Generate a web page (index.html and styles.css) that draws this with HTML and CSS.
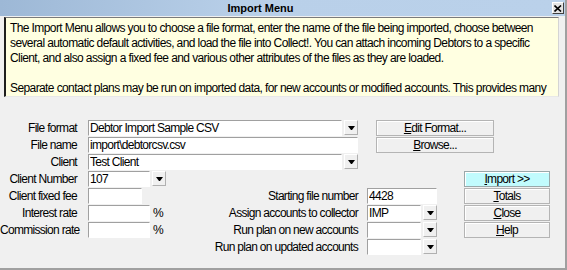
FILE: index.html
```html
<!DOCTYPE html>
<html lang="en">
<head>
    <title>Import Menu</title>
    <link rel="stylesheet" href="styles.css">
</head>
<body>
<div class="window">
    <div class="titlebar">
        <span class="title">Import Menu</span>
        <span class="close-btn">
            <svg width="8" height="7" viewBox="0 0 8 7"><path d="M0.5 0.5 L7 6.5 M7 0.5 L0.5 6.5" stroke="#000" stroke-width="1.6"/></svg>
        </span>
    </div>

    <div class="help-box">
        <p>The Import Menu allows you to choose a file format, enter the name of the file being imported, choose between<br>
        several automatic default activities, and load the file into Collect!. You can attach incoming Debtors to a specific<br>
        Client, and also assign a fixed fee and various other attributes of the files as they are loaded.</p>
        <p>Separate contact plans may be run on imported data, for new accounts or modified accounts. This provides many</p>
    </div>

    <form class="import-form">
        <!-- row 1 -->
        <label class="lbl r1">File format</label>
        <div class="combo r1 wide">
            <input type="text" class="field" value="Debtor Import Sample CSV">
            <span class="drop"></span>
        </div>
        <button type="button" class="btn r1 btn-edit"><u>E</u>dit Format...</button>

        <!-- row 2 -->
        <label class="lbl r2">File name</label>
        <input type="text" class="field r2 wide" value="import\debtorcsv.csv">
        <button type="button" class="btn r2 btn-edit"><u>B</u>rowse...</button>

        <!-- row 3 -->
        <label class="lbl r3">Client</label>
        <div class="combo r3 wide">
            <input type="text" class="field" value="Test Client">
            <span class="drop"></span>
        </div>

        <!-- row 4 -->
        <label class="lbl r4">Client Number</label>
        <div class="combo r4 short-combo">
            <input type="text" class="field" value="107">
            <span class="drop"></span>
        </div>
        <button type="button" class="btn btn-import r4 btn-cmd"><u>I</u>mport &gt;&gt;</button>

        <!-- row 5 -->
        <label class="lbl r5">Client fixed fee</label>
        <input type="text" class="field r5 fee">
        <label class="rlbl r5">Starting file number</label>
        <input type="text" class="field r5 small" value="4428">
        <button type="button" class="btn r5 btn-cmd"><u>T</u>otals</button>

        <!-- row 6 -->
        <label class="lbl r6">Interest rate</label>
        <input type="text" class="field r6 rate">
        <span class="pct r6">%</span>
        <label class="rlbl r6">Assign accounts to collector</label>
        <div class="combo r6 small">
            <input type="text" class="field" value="IMP">
            <span class="drop"></span>
        </div>
        <button type="button" class="btn r6 btn-cmd"><u>C</u>lose</button>

        <!-- row 7 -->
        <label class="lbl r7">Commission rate</label>
        <input type="text" class="field r7 rate">
        <span class="pct r7">%</span>
        <label class="rlbl r7">Run plan on new accounts</label>
        <div class="combo r7 small">
            <input type="text" class="field">
            <span class="drop"></span>
        </div>
        <button type="button" class="btn r7 btn-cmd"><u>H</u>elp</button>

        <!-- row 8 -->
        <label class="rlbl r8">Run plan on updated accounts</label>
        <div class="combo r8 small">
            <input type="text" class="field">
            <span class="drop"></span>
        </div>
    </form>
</div>
</body>
</html>
```

FILE: styles.css
```css
body{
    margin: 0;
    background: #fff;
    font-family: "Liberation Sans", Arial, sans-serif;
    font-size: 12px;
    letter-spacing: -0.7px;
    color: #000;
}
.window{
    width: 565px;
    height: 268px;
    background: #f0f0f0;
    border-right: 2px solid #a0a0a0;
    border-bottom: 2px solid #a0a0a0;
    overflow: hidden;
}

/* title bar */
.titlebar{
    height: 16px;
    display: flex;
    align-items: center;
    background: linear-gradient(to right, #9db8d6, #b9d0e9 45%, #bad1ea);
}
.title{
    flex: 1;
    margin-right: 31px;
    text-align: center;
    font-weight: bold;
    font-size: 11px;
    letter-spacing: 0;
}
.close-btn{
    width: 12px;
    height: 12px;
    margin-right: 1px;
    box-sizing: border-box;
    display: flex;
    align-items: center;
    justify-content: center;
    background: #e4e4e4;
    border: 1px solid;
    border-color: #fff #404040 #404040 #fff;
}

/* yellow description */
.help-box{
    height: 80px;
    margin: 1px 6px 0 4px;
    padding: 3px 0 0 4px;
    box-sizing: border-box;
    background: #ffffe1;
    border-style: solid;
    border-width: 1px 1px 1px 2px;
    border-color: #7a7a7a #d4d4d4 #e8e8e8 #1e1e1e;
    line-height: 15px;
    letter-spacing: -0.6px;
    white-space: nowrap;
    overflow: hidden;
}
.help-box p{
    margin: 0 0 15px;
}

/* form grid */
.import-form{
    display: grid;
    grid-template-columns: 77px 11px 62px 208px 9px 9px 61px 27px 30px 56px;
    grid-template-rows: repeat(8, 17px);
    align-items: start;
    margin-top: 23px;
}
.r1{ grid-row: 1; }
.r2{ grid-row: 2; }
.r3{ grid-row: 3; }
.r4{ grid-row: 4; }
.r5{ grid-row: 5; }
.r6{ grid-row: 6; }
.r7{ grid-row: 7; }
.r8{ grid-row: 8; }

.lbl{
    grid-column: 1;
    text-align: right;
    line-height: 16px;
    white-space: nowrap;
}
.rlbl{
    grid-column: 4;
    justify-self: end;
    line-height: 16px;
    white-space: nowrap;
}
.pct{
    grid-column: 4;
    justify-self: start;
    margin-left: 3px;
    line-height: 16px;
}

.field{
    height: 16px;
    width: 100%;
    margin: 0;
    padding: 0 1px;
    box-sizing: border-box;
    background: #fff;
    border: 1px solid;
    border-color: #a0a0a0 #fff #fff #a0a0a0;
    font-family: inherit;
    font-size: 12px;
    letter-spacing: inherit;
    color: #000;
    outline: none;
}
.wide{ grid-column: 3 / 5; }
.short-combo{
    grid-column: 3 / 5;
    width: 78px;
}
.fee{
    grid-column: 3;
    width: 54px;
}
.rate{ grid-column: 3; }
.small{ grid-column: 6 / 8; }

.combo{
    display: flex;
    gap: 2px;
}
.combo .field{
    flex: 1;
    min-width: 0;
}
.drop{
    flex: none;
    width: 14px;
    height: 15px;
    box-sizing: border-box;
    display: flex;
    align-items: center;
    justify-content: center;
    background: #f0f0f0;
    border: 1px solid;
    border-color: #fff #b0b0b0 #b0b0b0 #fff;
}
.drop::after{
    content: "";
    width: 1px;
    border-left: 3px solid transparent;
    border-right: 3px solid transparent;
    border-top: 4px solid #000;
}

.btn{
    height: 16px;
    margin: 0;
    padding: 0;
    box-sizing: border-box;
    background: #f0f0f0;
    border: 1px solid #b4b4b4;
    box-shadow: inset 1px 1px #fff;
    font-family: inherit;
    font-size: 12px;
    letter-spacing: inherit;
    line-height: 14px;
    color: #000;
    text-align: center;
}
.btn-edit{ grid-column: 7 / 10; }
.btn-cmd{ grid-column: 9 / 11; }
.btn-import{
    background: #c1fbfd;
    border-color: #9aa8aa;
}
```
